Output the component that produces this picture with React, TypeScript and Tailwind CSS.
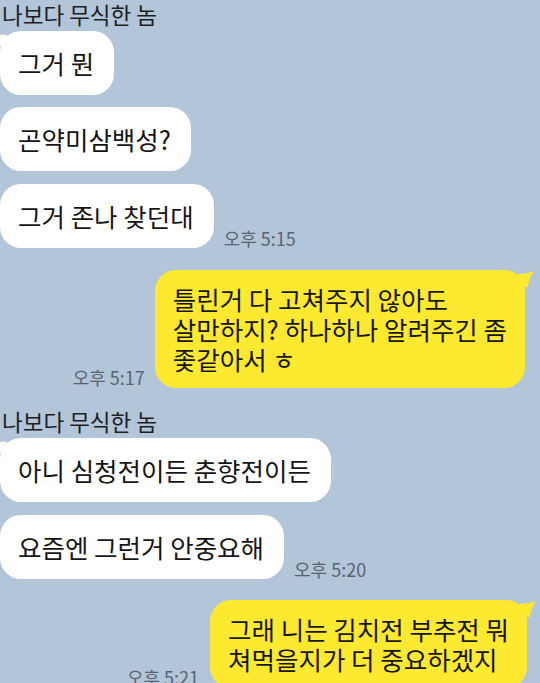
import React from "react";

const font = "font-['Noto_Sans_CJK_KR','Noto_Sans',sans-serif]";

function LeftTail() {
  return (
    <svg className="absolute left-[-7px] top-[2px]" width="14" height="14" viewBox="0 0 14 14">
      <path d="M14 2 C10 2 4 1 0 4 C4 6 6 10 8 14 L14 14 Z" fill="#ffffff" />
    </svg>
  );
}

function RightTail() {
  return (
    <svg className="absolute right-[-9px] top-[1px]" width="16" height="16" viewBox="0 0 16 16">
      <path d="M0 3 C5 3 11 2 16 0 C13 4 11 8 10 16 L0 16 Z" fill="#fde92f" />
    </svg>
  );
}

function Name({ children, className = "" }: { children: React.ReactNode; className?: string }) {
  return (
    <div className={`pl-[2px] text-[22.5px] leading-[28px] text-[#1e1e1e] ${className}`}>{children}</div>
  );
}

function Time({ children }: { children: React.ReactNode }) {
  return (
    <div className="text-[18px] leading-[20px] text-[#5a646f] whitespace-nowrap">{children}</div>
  );
}

function WhiteBubble({ children, tail }: { children: React.ReactNode; tail?: boolean }) {
  return (
    <div className="relative rounded-[21px] bg-white pl-[18px] pr-[20px] py-[16px] text-[25.5px] leading-[32px] text-[#161616] whitespace-nowrap">
      {tail && <LeftTail />}
      {children}
    </div>
  );
}

function YellowBubble({ children }: { children: React.ReactNode }) {
  return (
    <div className="relative rounded-[21px] bg-[#fde92f] pl-[18px] pr-[18px] py-[14px] text-[25.5px] leading-[30px] text-[#161616] whitespace-nowrap">
      <RightTail />
      {children}
    </div>
  );
}

export default function App() {
  return (
    <div className={`w-[540px] h-[683px] overflow-hidden bg-[#b2c5d9] ${font}`}>
      <Name>나보다 무식한 놈</Name>
      <div className="mt-[3px] flex flex-col items-start gap-[12px]">
        <WhiteBubble tail>그거 뭔</WhiteBubble>
        <div className="mb-[1px]">
          <WhiteBubble>곤약미삼백성?</WhiteBubble>
        </div>
        <div className="flex items-end gap-[10px]">
          <WhiteBubble>그거 존나 찾던대</WhiteBubble>
          <Time>오후 5:15</Time>
        </div>
      </div>

      <div className="mt-[22px] flex items-end justify-end gap-[10px] pr-[15px]">
        <div className="pb-[1px]">
          <Time>오후 5:17</Time>
        </div>
        <YellowBubble>
          <div>틀린거 다 고쳐주지 않아도</div>
          <div>살만하지? 하나하나 알려주긴 좀</div>
          <div>좇같아서 ㅎ</div>
        </YellowBubble>
      </div>

      <Name className="mt-[19px]">나보다 무식한 놈</Name>
      <div className="mt-[3px] flex flex-col items-start gap-[13px]">
        <WhiteBubble tail>아니 심청전이든 춘향전이든</WhiteBubble>
        <div className="flex items-end gap-[10px]">
          <WhiteBubble>요즘엔 그런거 안중요해</WhiteBubble>
          <Time>오후 5:20</Time>
        </div>
      </div>

      <div className="mt-[21px] flex items-end justify-end gap-[11px] pr-[13px]">
        <div className="pb-[1px]">
          <Time>오후 5:21</Time>
        </div>
        <YellowBubble>
          <div>그래 니는 김치전 부추전 뭐</div>
          <div>쳐먹을지가 더 중요하겠지</div>
        </YellowBubble>
      </div>
    </div>
  );
}
